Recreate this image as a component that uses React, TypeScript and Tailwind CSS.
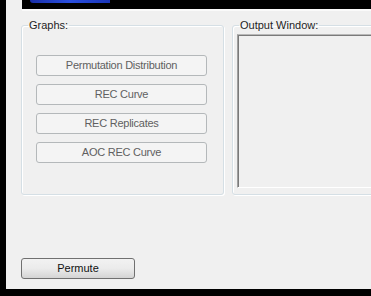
import React from 'react';

const graphButtons = ['Permutation Distribution', 'REC Curve', 'REC Replicates', 'AOC REC Curve'];

// Win7-style group box
const GroupBox = ({ title, className, children }: { title: string; className: string; children: React.ReactNode }) => (
  <fieldset
    className={`min-w-0 h-[176px] rounded-[3px] border border-[#d5dfe5] shadow-[inset_1px_1px_0_#fff,1px_1px_0_#fff] ${className}`}
  >
    <legend className="ml-[6px] px-[1px] text-[11px] leading-[13px] text-[#1e1e1e]">{title}</legend>
    {children}
  </fieldset>
);

export default function App() {
  return (
    <div className="w-[371px] h-[296px] overflow-hidden bg-black pl-[6px] pb-[7px] font-['Liberation_Sans',Arial,sans-serif]">
      <div className="h-full bg-[#f0f0f0] flex flex-col">
        {/* header strip */}
        <div className="pl-[16px]">
          <div className="h-[9px] bg-black pl-[8px]">
            <div className="h-[3px] w-[80px] rounded-bl-[4px] bg-gradient-to-r from-[#1a2fa8] via-[#2a4fe0] to-[#1a35b8]" />
          </div>
          <div className="h-[2px] bg-[#fafafa]" />
        </div>

        <div className="mt-[8px] flex gap-[8px] pl-[15px]">
          <GroupBox title="Graphs:" className="w-[203px] shrink-0">
            <div className="mt-[23px] flex flex-col gap-[8px] pl-[14px]">
              {graphButtons.map((label) => (
                <button
                  key={label}
                  disabled
                  className="h-[21px] w-[171px] rounded-[3px] border border-[#b4b8ba] bg-[#f4f4f4] text-[11px] tracking-[-0.25px] text-[#606060]"
                >
                  {label}
                </button>
              ))}
            </div>
          </GroupBox>

          <GroupBox title="Output Window:" className="w-[200px] shrink-0 flex flex-col">
            <div className="mt-[2px] ml-[4px] h-[154px] border border-t-[#b8b8b8] border-l-[#a0a0a0] border-b-white border-r-white shadow-[inset_1px_1px_0_#7a7a7a] bg-[#f0f0f0]" />
          </GroupBox>
        </div>

        <div className="flex-1" />

        <div className="pl-[15px] mb-[10px]">
          <button className="h-[21px] w-[114px] rounded-[3px] border border-[#707070] bg-gradient-to-b from-[#f2f2f2] via-[#ebebeb] to-[#d4d4d4] text-[11px] text-[#111]">
            Permute
          </button>
        </div>
      </div>
    </div>
  );
}
